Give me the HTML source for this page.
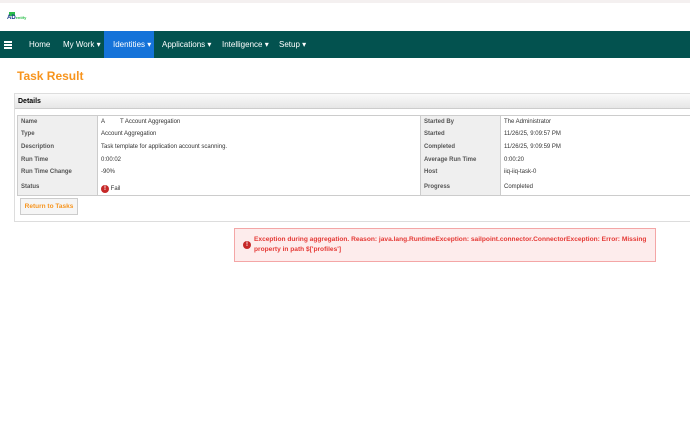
<!DOCTYPE html>
<html><head><style>
*{margin:0;padding:0;box-sizing:border-box}
body{width:690px;height:421px;background:#fff;font-family:"Liberation Sans",sans-serif;position:relative;overflow:hidden}
.topline{position:absolute;top:0;left:0;width:690px;height:3px;background:#f4f0f0}
.nav{position:absolute;top:31px;left:0;width:690px;height:27px;background:#03524f;color:#fff;font-size:8px}
.nav span{position:absolute;top:9px}
.ident{position:absolute;left:104px;top:0;width:50px;height:27px;background:#1573d9}
h1{position:absolute;left:17px;top:69px;font-size:12px;color:#f7941d;font-weight:bold}
.panel{position:absolute;left:14px;top:93px;width:680px;height:129px;border:1px solid #ddd;background:#fff}
.ph{height:15px;background:linear-gradient(#fafafa,#e6e6e6);border-bottom:1px solid #ccc;font-size:7px;font-weight:bold;padding:4px 0 0 3px}
table{position:absolute;left:2px;top:21px;border-collapse:collapse;font-size:6px;color:#333;table-layout:fixed;width:753px;border:1px solid #ccc}
td{height:12.6px;padding:0 3px;vertical-align:middle;border:0;white-space:nowrap;overflow:hidden}
td.l{background:#efefef;color:#555;font-weight:bold}
tr.last td{height:17px}
.btn{position:absolute;left:5px;top:104px;width:58px;height:17px;border:1px solid #ccc;background:#f5f5f5;color:#f7941d;font-size:6.5px;font-weight:bold;text-align:center;line-height:16px}
.err{position:absolute;left:234px;top:228px;width:422px;height:34px;border:1px solid #f4a6a6;background:#fdecec;color:#e53935;font-size:6.6px;font-weight:bold;padding:6px 0 0 19px;line-height:10px;white-space:nowrap}
.ic{display:inline-block;width:8px;height:8px;border-radius:50%;background:#c62828;color:#fff;font-size:6px;text-align:center;line-height:8px;font-weight:bold}
</style></head><body>
<div class="topline"></div>
<div style="position:absolute;left:9px;top:12px;width:6px;height:4px;background:#2bbf4a"></div>
<div style="position:absolute;left:7px;top:15px;font-size:6px;font-weight:bold;color:#1a3a8a">AD<span style="color:#2bbf4a;font-size:4px">entify</span></div>
<div class="nav"><div class="ident"></div>
<div style="position:absolute;left:4px;top:10px;width:8px;height:1.5px;background:#fff;box-shadow:0 3px 0 #fff,0 6px 0 #fff"></div>
<span style="left:29px">Home</span><span style="left:63px">My Work ▾</span><span style="left:113px">Identities ▾</span><span style="left:162px">Applications ▾</span><span style="left:222px">Intelligence ▾</span><span style="left:279px">Setup ▾</span></div>
<h1>Task Result</h1>
<div class="panel"><div class="ph">Details</div>
<table>
<colgroup><col style="width:80px"><col style="width:323px"><col style="width:80px"><col style="width:270px"></colgroup>
<tr><td class="l">Name</td><td style="border-left:1px solid #ccc">A&nbsp;&nbsp;&nbsp;&nbsp;&nbsp;&nbsp;&nbsp;&nbsp;&nbsp;T Account Aggregation</td><td class="l" style="border-left:1px solid #ccc">Started By</td><td style="border-left:1px solid #ccc">The Administrator</td></tr>
<tr><td class="l">Type</td><td style="border-left:1px solid #ccc">Account Aggregation</td><td class="l" style="border-left:1px solid #ccc">Started</td><td style="border-left:1px solid #ccc">11/26/25, 9:09:57 PM</td></tr>
<tr><td class="l">Description</td><td style="border-left:1px solid #ccc">Task template for application account scanning.</td><td class="l" style="border-left:1px solid #ccc">Completed</td><td style="border-left:1px solid #ccc">11/26/25, 9:09:59 PM</td></tr>
<tr><td class="l">Run Time</td><td style="border-left:1px solid #ccc">0:00:02</td><td class="l" style="border-left:1px solid #ccc">Average Run Time</td><td style="border-left:1px solid #ccc">0:00:20</td></tr>
<tr><td class="l">Run Time Change</td><td style="border-left:1px solid #ccc">-90%</td><td class="l" style="border-left:1px solid #ccc">Host</td><td style="border-left:1px solid #ccc">iiq-iiq-task-0</td></tr>
<tr class="last"><td class="l">Status</td><td style="border-left:1px solid #ccc;padding-top:4px"><span class="ic">!</span> Fail</td><td class="l" style="border-left:1px solid #ccc">Progress</td><td style="border-left:1px solid #ccc">Completed</td></tr>
</table>
<div class="btn">Return to Tasks</div>
</div>
<div class="err"><span class="ic" style="position:absolute;left:8px;top:12px">!</span>Exception during aggregation. Reason: java.lang.RuntimeException: sailpoint.connector.ConnectorException: Error: Missing<br>property in path $['profiles']</div>
</body></html>
